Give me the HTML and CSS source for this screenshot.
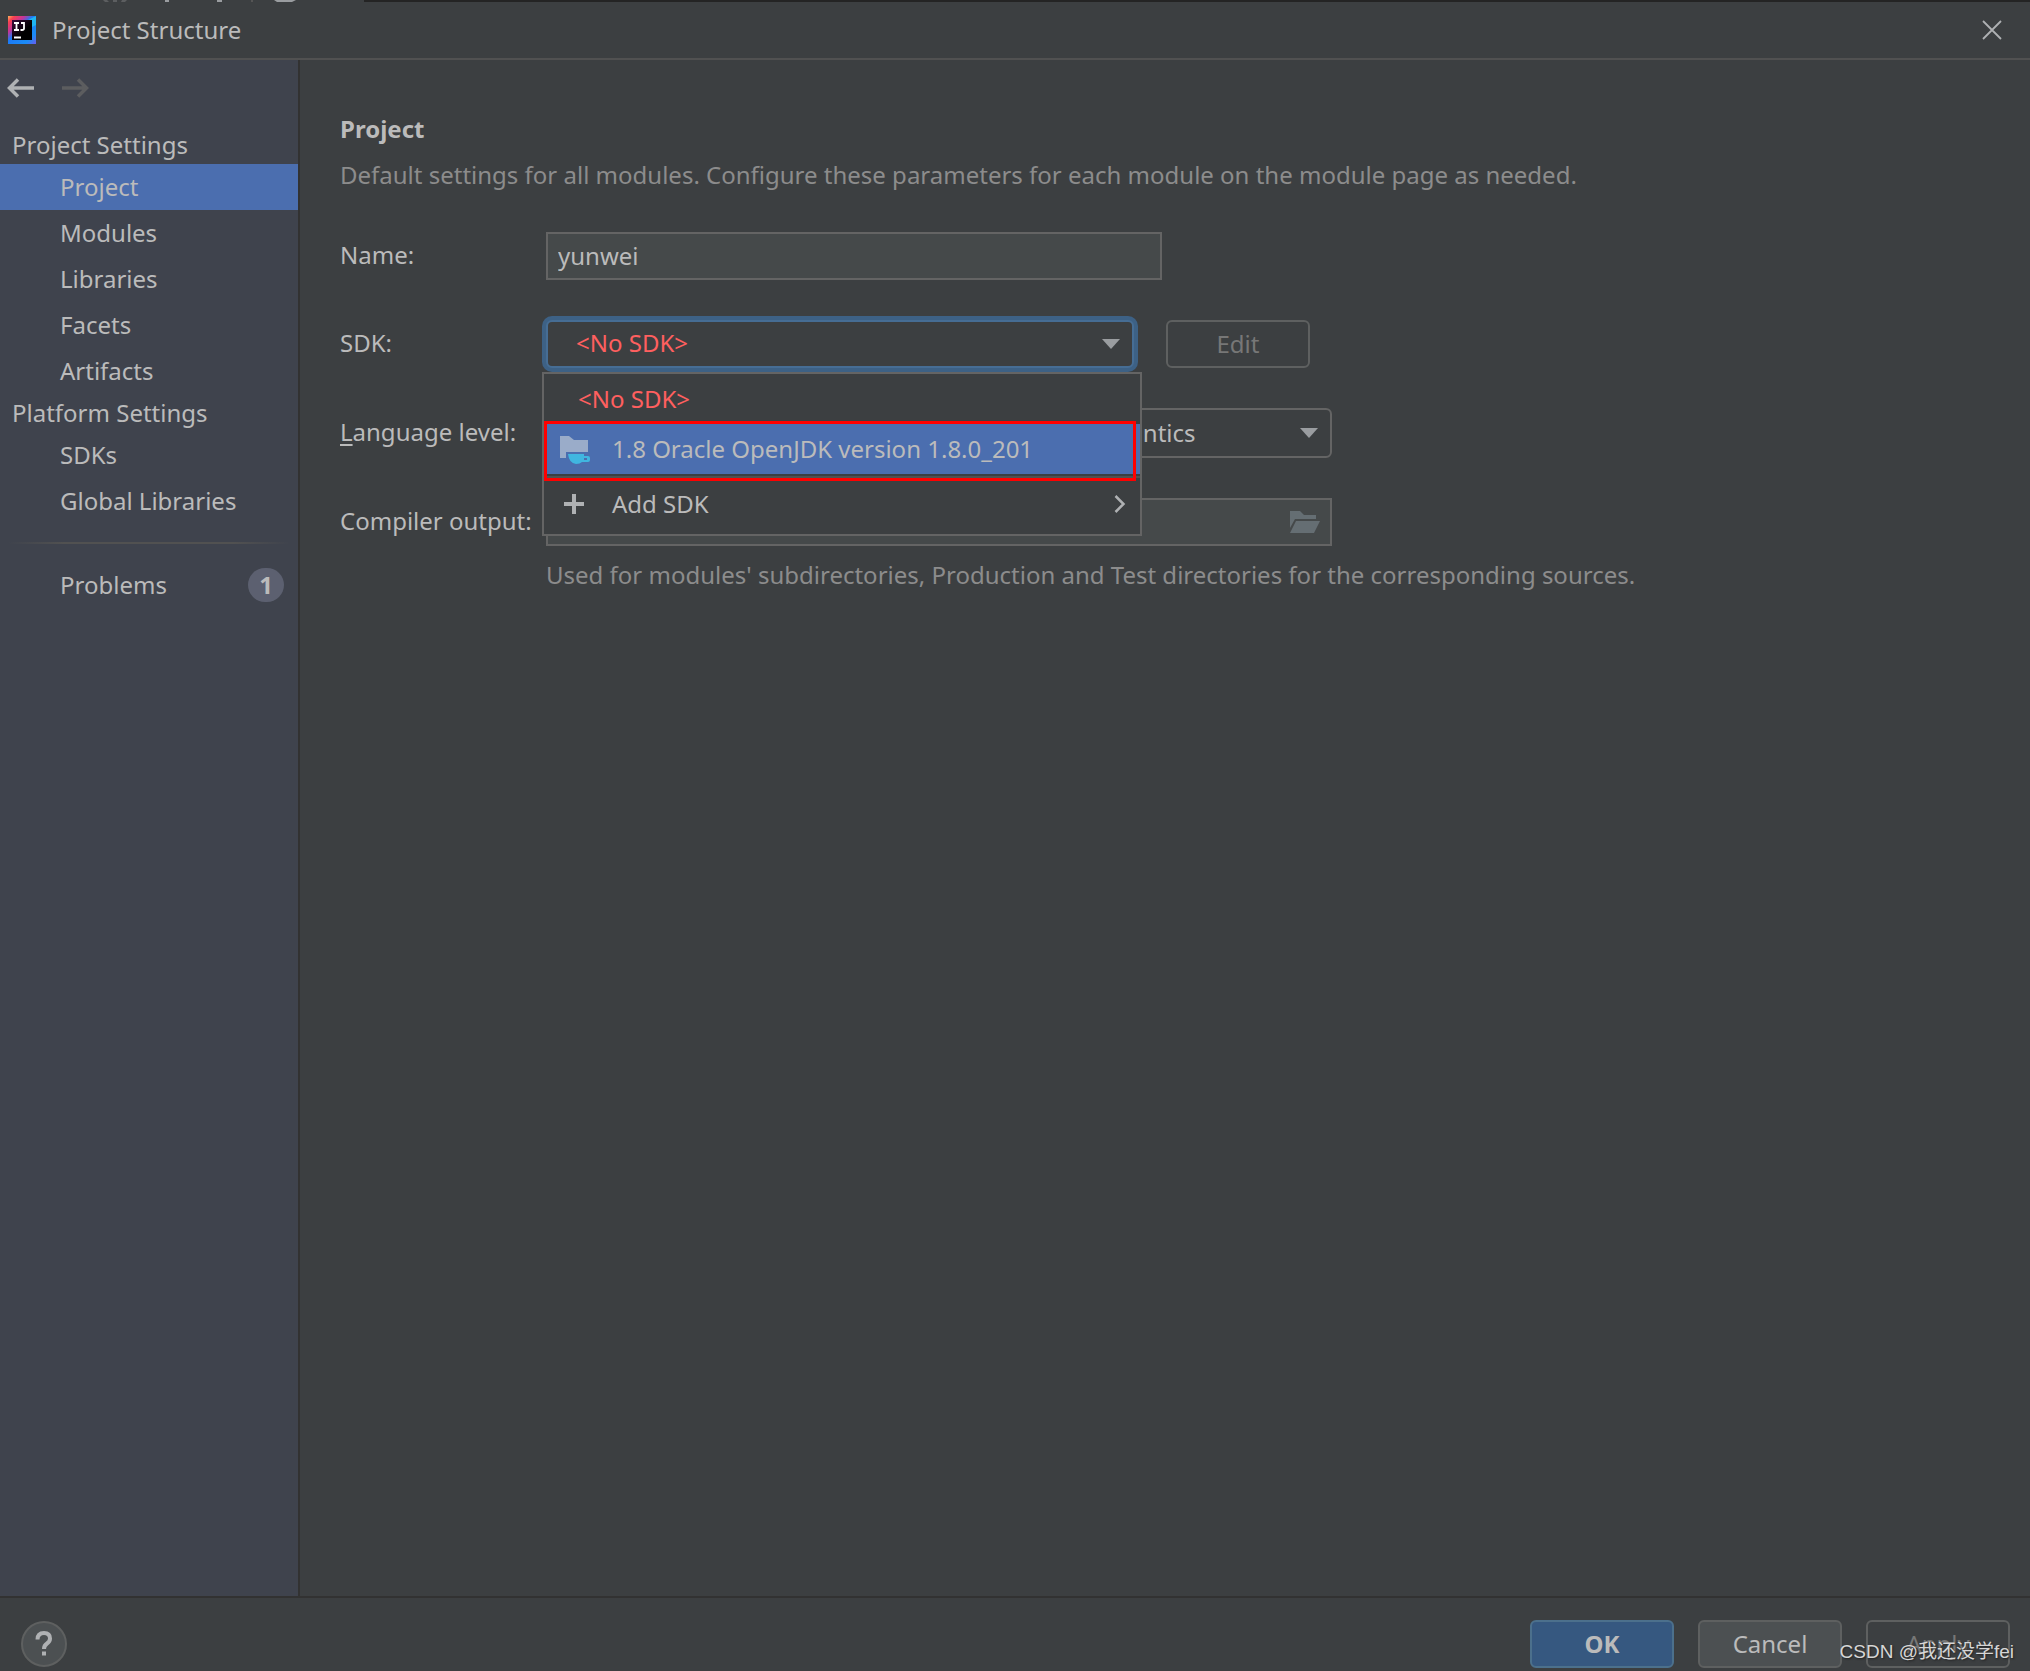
FILE: index.html
```html
<!DOCTYPE html>
<html lang="en">
<head>
<meta charset="utf-8">
<title>Project Structure</title>
<link rel="stylesheet" href="styles.css">
</head>
<body>
<div class="dialog">
  <div class="backdrop-edge">
    <svg width="364" height="2" aria-hidden="true"><rect width="364" height="2" fill="#3c3f41"/><path d="M103 0h4l2 2h-4zM113 0h4v2h-4zM122 0h5l-2 2h-4z" fill="#5c5e60"/><path d="M165 0h4v2h-4zM217 0h5v2h-5zM274 0h22l-4 2h-15z" fill="#9a9da0"/><path d="M251 0h2v2h-2z" fill="#555"/></svg>
  </div>
  <header class="titlebar">
    <svg class="logo" width="28" height="28" viewBox="0 0 28 28" aria-hidden="true">
      <defs>
        <linearGradient id="frame" x1="0" y1="0" x2="1" y2="1"><stop offset="0" stop-color="#fdb45c"/><stop offset=".12" stop-color="#f9404f"/><stop offset=".3" stop-color="#c2359b"/><stop offset=".45" stop-color="#1c7af5"/><stop offset=".8" stop-color="#1a8cf6"/><stop offset="1" stop-color="#6b5cf0"/></linearGradient>
        <linearGradient id="core" x1="0" y1="0" x2="1" y2="1"><stop offset="0" stop-color="#3a0a3c"/><stop offset=".6" stop-color="#000"/></linearGradient>
      </defs>
      <path d="M0 0h28v28H0z" fill="url(#frame)"/>
      <path d="M20 4l8-4v9l-4 2z" fill="#1fb5f2"/>
      <path d="M4 4h20v20H4z" fill="url(#core)"/>
      <path d="M6 7h5M8.500 7v7M6 14h5M13 7h3v5.500q0 1.500-2 1.500h-1.500M6 21.500h7" fill="none" stroke="#fff" stroke-width="1.800"/>
    </svg>
    <h1 class="title">Project Structure</h1>
    <button class="icon-button close" aria-label="Close"><svg width="20" height="20" viewBox="0 0 20 20"><path d="M1 1l18 18M19 1L1 19" stroke="#afb1b3" stroke-width="1.800"/></svg></button>
  </header>
  <div class="body">
    <nav class="sidebar">
      <div class="history">
        <button class="icon-button" aria-label="Back"><svg width="28" height="20" viewBox="0 0 28 20"><path d="M27 10H3M11 1.500L2.500 10l8.500 8.500" fill="none" stroke="#afb1b3" stroke-width="3.500"/></svg></button>
        <button class="icon-button" aria-label="Forward" disabled><svg width="28" height="20" viewBox="0 0 28 20"><path d="M1 10h24M17 1.500l8.500 8.500-8.500 8.500" fill="none" stroke="#5c5d5f" stroke-width="3.500"/></svg></button>
      </div>
      <h2 class="group">Project Settings</h2>
      <a class="item selected" href="#project">Project</a>
      <a class="item" href="#modules">Modules</a>
      <a class="item" href="#libraries">Libraries</a>
      <a class="item" href="#facets">Facets</a>
      <a class="item" href="#artifacts">Artifacts</a>
      <h2 class="group">Platform Settings</h2>
      <a class="item" href="#sdks">SDKs</a>
      <a class="item" href="#global">Global Libraries</a>
      <hr class="divider">
      <a class="item" href="#problems">Problems <span class="badge">1</span></a>
    </nav>
    <main class="content">
      <h2 class="heading">Project</h2>
      <p class="muted">Default settings for all modules. Configure these parameters for each module on the module page as needed.</p>
      <form class="form" id="settings">
        <label for="name">Name:</label>
        <input class="field name" id="name" type="text" value="yunwei">

        <label for="sdk">SDK:</label>
        <div class="sdk-row">
          <div class="combo sdk">
            <select id="sdk" class="focused"><option>&lt;No SDK&gt;</option></select>
            <svg class="caret" width="18" height="10" viewBox="0 0 18 10"><path d="M0 0h18L9 10z" fill="#9a9da0"/></svg>
            <div class="popup">
              <button type="button" class="option none">&lt;No SDK&gt;</button>
              <button type="button" class="option active">
                <svg width="32" height="30" viewBox="0 0 32 30"><path d="M2 2h9l5 4h14v12H8v6H2z" fill="#9aacc9"/><path d="M10 20h16v2h4q2 0 2 2v2q0 2-2 2h-6q-2 2-6 2-7-1-8-10zM26 24v2h3v-2z" fill="#40b6e0" fill-rule="evenodd"/></svg>
                1.8 Oracle OpenJDK version 1.8.0_201
              </button>
              <button type="button" class="option add">
                <svg width="32" height="20" viewBox="0 0 32 20"><path d="M16 0v20M6 10h20" stroke="#afb1b3" stroke-width="4"/></svg>
                Add SDK
                <svg class="more" width="12" height="18" viewBox="0 0 12 18"><path d="M1.500 1l8 8-8 8" fill="none" stroke="#afb1b3" stroke-width="2.500"/></svg>
              </button>
              <div class="marker"></div>
            </div>
          </div>
          <button type="button" class="button" disabled>Edit</button>
        </div>

        <label for="level"><u>L</u>anguage level:</label>
        <div class="combo wide">
          <select id="level" class="level"><option>17 - Sealed types, always-strict floating-point semantics</option></select>
          <svg class="caret" width="18" height="10" viewBox="0 0 18 10"><path d="M0 0h18L9 10z" fill="#9a9da0"/></svg>
        </div>

        <label for="output">Compiler output:</label>
        <div class="combo wide">
          <input class="field" id="output" type="text">
          <svg class="folder" width="30" height="22" viewBox="0 0 30 22"><path d="M0 0h10l4 4h12v4H5L0 17z" fill="#656e73"/><path d="M6 10h24l-6 12H0z" fill="#656e73"/></svg>
        </div>
        <p class="muted hint">Used for modules' subdirectories, Production and Test directories for the corresponding sources.</p>
      </form>
    </main>
  </div>
  <footer class="footer">
    <button class="help" aria-label="Help"><svg width="18" height="26" viewBox="0 0 18 26"><path d="M2.500 8.500q0-6.500 6.500-6.500 6 0 6 5.500 0 3-3 5-3 2-3 5.500" fill="none" stroke="#afb1b3" stroke-width="4"/><path d="M7 20.500h4v4H7z" fill="#afb1b3"/></svg></button>
    <button class="button primary">OK</button>
    <button class="button filled">Cancel</button>
    <button class="button" disabled>Apply</button>
    <span class="watermark">CSDN @我还没学fei</span>
  </footer>
</div>
</body>
</html>
```
FILE: styles.css
```css
* { box-sizing: border-box; }
body {
  margin: 0;
  background: #3c3f41;
  color: #bbb;
  font: 24px/32px "Noto Sans", "Noto Sans CJK SC", sans-serif;
}
h1, h2, p { margin: 0; font: inherit; }
button, input, select { font: inherit; color: inherit; margin: 0; }
svg { display: block; flex: none; }

.dialog { display: flex; flex-direction: column; min-height: 100vh; }
.backdrop-edge { height: 2px; background: #242424; }
.titlebar {
  display: flex;
  align-items: center;
  height: 58px;
  padding: 0 28px 0 8px;
  border-bottom: 2px solid #515151;
}
.title { margin-left: 16px; }
.close { margin-left: auto; }
.icon-button { padding: 0; border: 0; background: none; }

.body { display: flex; flex: 1; }
.sidebar {
  width: 300px;
  flex: none;
  background: #3f434d;
  border-right: 2px solid #323232;
}
.history { display: flex; align-items: center; gap: 26px; height: 56px; padding-left: 7px; margin-bottom: 10px; }
.group { height: 38px; line-height: 38px; padding-left: 12px; }
.item {
  display: flex;
  align-items: center;
  height: 46px;
  padding: 0 14px 0 60px;
  color: inherit;
  text-decoration: none;
}
.item.selected { background: #4b6eaf; }
.divider { height: 2px; margin: 18px 8px; border: 0; background: linear-gradient(90deg, transparent, #515151 20%, #515151 80%, transparent); }
.badge {
  margin-left: auto;
  width: 36px;
  height: 34px;
  border-radius: 17px;
  background: #5c6070;
  font-weight: 700;
  line-height: 34px;
  text-align: center;
}

.content { flex: 1; min-width: 0; padding: 53px 40px 40px; }
.heading { font-weight: 700; margin-bottom: 14px; }
.muted { color: #8c8c8c; }
.form {
  display: grid;
  grid-template-columns: 206px 1fr;
  row-gap: 40px;
  align-items: center;
  margin-top: 41px;
}
.form label { padding-bottom: 2px; white-space: nowrap; }
.form u { text-underline-offset: 3px; }
.field {
  width: 100%;
  height: 48px;
  padding: 0 10px 2px;
  border: 2px solid #646464;
  background: #45494a;
  outline: 0;
}
.name { max-width: 616px; }
.sdk-row { display: flex; gap: 32px; }
.combo { position: relative; display: grid; align-items: center; }
.combo > * { grid-area: 1 / 1; }
.sdk { width: 588px; }
.wide { max-width: 786px; }
.combo select {
  appearance: none;
  width: 100%;
  height: 50px;
  padding: 0 48px 0 26px;
  border: 2px solid #646464;
  border-radius: 6px;
  background: #3c3f41;
  outline: 0;
}
.combo select.focused {
  height: 48px;
  padding: 0 48px 2px 28px;
  border-color: #466d94;
  box-shadow: 0 0 0 4px #3d6185;
  color: #ff5f5f;
}
.caret { justify-self: end; margin-right: 14px; pointer-events: none; }
.folder { justify-self: end; margin-right: 12px; }
.popup {
  position: absolute;
  z-index: 2;
  top: 52px;
  left: -4px;
  width: 600px;
  border: 2px solid #646464;
  background: #3c3f41;
}
.option {
  display: flex;
  align-items: center;
  gap: 22px;
  width: 100%;
  height: 50px;
  padding: 0 14px;
  border: 0;
  background: none;
  text-align: left;
}
.option.none { padding-left: 34px; color: #ff5f5f; }
.option.active { background: #4b6eaf; }
.option.add { height: 58px; margin-top: 2px; padding-bottom: 4px; border-top: 2px solid #515151; }
.more { margin-left: auto; }
.marker {
  position: absolute;
  top: 47px;
  left: 0;
  right: 4px;
  height: 60px;
  border: 3px solid #f00;
  pointer-events: none;
}
.hint { grid-column: 2; margin-top: -27px; }

.button {
  width: 144px;
  height: 48px;
  padding: 0;
  border: 2px solid #5e6060;
  border-radius: 6px;
  background: none;
}
.button:disabled { color: #777; }
.button.filled { background: #4c5052; }
.button.primary { background: #365880; border-color: #4c708c; font-weight: 700; }
.footer {
  position: relative;
  display: flex;
  align-items: flex-start;
  gap: 24px;
  height: 75px;
  padding: 22px 20px 0 21px;
  border-top: 2px solid #323232;
}
.help {
  display: grid;
  place-items: center;
  width: 46px;
  height: 46px;
  margin: 1px auto 0 0;
  padding: 0;
  border: 2px solid #5e6060;
  border-radius: 50%;
  background: #4c5052;
}
.watermark {
  position: absolute;
  right: 16px;
  bottom: 3px;
  color: #d6d6d6;
  font: 19px/32px "Liberation Sans", "Noto Sans CJK SC", sans-serif;
  text-shadow: 1px 1px 2px #222;
}
```
